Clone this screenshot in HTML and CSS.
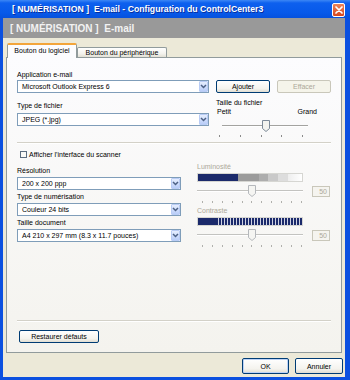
FILE: index.html
```html
<!DOCTYPE html>
<html lang="fr">
<head>
<meta charset="utf-8">
<title>E-mail - Configuration du ControlCenter3</title>
<link rel="stylesheet" href="styles.css">
</head>
<body>
<div class="window">
  <div class="titlebar">
    <span class="title">[ NUMÉRISATION ]&nbsp; E-mail - Configuration du ControlCenter3</span>
    <span class="close"><svg width="8" height="8" viewBox="0 0 8 8"><path d="M1 1L7 7M7 1L1 7" stroke="#fff" stroke-width="1.7" stroke-linecap="round"/></svg></span>
  </div>
  <div class="client">
    <div class="banner">[ NUMÉRISATION ]&nbsp; E-mail</div>
    <div class="tabs">
      <div class="tab active">Bouton du logiciel</div>
      <div class="tab">Bouton du périphérique</div>
    </div>
    <div class="panel">
      <div class="top">
        <div class="col-left">
          <div class="lbl">Application e-mail</div>
          <div class="select mt1"><span>Microsoft Outlook Express 6</span><span class="arrow"><svg width="7" height="5" viewBox="0 0 7 5"><path d="M1 1L3.5 3.5L6 1" fill="none" stroke="#4D6185" stroke-width="1.5"/></svg></span></div>
          <div class="lbl mt8">Type de fichier</div>
          <div class="select mt3"><span>JPEG (*.jpg)</span><span class="arrow"><svg width="7" height="5" viewBox="0 0 7 5"><path d="M1 1L3.5 3.5L6 1" fill="none" stroke="#4D6185" stroke-width="1.5"/></svg></span></div>
        </div>
        <div class="col-right">
          <div class="btnrow">
            <div class="btn small">Ajouter</div>
            <div class="btn small disabled">Effacer</div>
          </div>
          <div class="lbl mt5">Taille du fichier</div>
          <div class="range"><span>Petit</span><span>Grand</span></div>
          <div class="slider size">
            <div class="track"></div>
            <svg class="thumb" width="8" height="12" viewBox="0 0 8 12"><path d="M0.5 0.5H7.5V8.5L4 11.5L0.5 8.5Z" fill="#F3F3EF" stroke="#7D8A98"/></svg>
          </div>
          <div class="ticks size-ticks"><i></i><i></i><i></i><i></i><i></i></div>
        </div>
      </div>
      <div class="sep"></div>
      <div class="check"><span class="box"></span><span>Afficher l'interface du scanner</span></div>
      <div class="lower">
        <div class="low-left">
          <div class="lbl mt7">Résolution</div>
          <div class="select mt2"><span>200 x 200 ppp</span><span class="arrow"><svg width="7" height="5" viewBox="0 0 7 5"><path d="M1 1L3.5 3.5L6 1" fill="none" stroke="#4D6185" stroke-width="1.5"/></svg></span></div>
          <div class="lbl mt2">Type de numérisation</div>
          <div class="select mt2"><span>Couleur 24 bits</span><span class="arrow"><svg width="7" height="5" viewBox="0 0 7 5"><path d="M1 1L3.5 3.5L6 1" fill="none" stroke="#4D6185" stroke-width="1.5"/></svg></span></div>
          <div class="lbl mt2">Taille document</div>
          <div class="select mt2"><span>A4 210 x 297 mm (8.3 x 11.7 pouces)</span><span class="arrow"><svg width="7" height="5" viewBox="0 0 7 5"><path d="M1 1L3.5 3.5L6 1" fill="none" stroke="#4D6185" stroke-width="1.5"/></svg></span></div>
        </div>
        <div class="low-right">
          <div class="lbl dim mt3">Luminosité</div>
          <div class="bar lum mt2"><i class="s1"></i><i class="s2"></i><i class="s3"></i><i class="s4"></i><i class="s5"></i><i class="s6"></i></div>
          <div class="srow mt2">
            <div class="slider wide">
              <div class="track dis"></div>
              <svg class="thumb" width="8" height="12" viewBox="0 0 8 12"><path d="M0.5 0.5H7.5V8.5L4 11.5L0.5 8.5Z" fill="#F5F5F2" stroke="#B5B8BC"/></svg>
            </div>
            <div class="valbox">50</div>
          </div>
          <div class="ticks wide-ticks mt3"><i></i><i></i><i></i><i></i><i></i><i></i><i></i><i></i><i></i><i></i><i></i></div>
          <div class="lbl dim mt3">Contraste</div>
          <div class="bar con mt2"></div>
          <div class="srow mt2">
            <div class="slider wide">
              <div class="track dis"></div>
              <svg class="thumb" width="8" height="12" viewBox="0 0 8 12"><path d="M0.5 0.5H7.5V8.5L4 11.5L0.5 8.5Z" fill="#F5F5F2" stroke="#B5B8BC"/></svg>
            </div>
            <div class="valbox">50</div>
          </div>
          <div class="ticks wide-ticks mt3"><i></i><i></i><i></i><i></i><i></i><i></i><i></i><i></i><i></i><i></i><i></i></div>
        </div>
      </div>
      <div class="bottom">
        <div class="sep"></div>
        <div class="btn restore">Restaurer défauts</div>
      </div>
    </div>
    <div class="footer">
      <div class="btn big default">OK</div>
      <div class="btn big">Annuler</div>
    </div>
  </div>
</div>
</body>
</html>
```

FILE: styles.css
```css
* { box-sizing: border-box; }
body {
  margin: 0;
  font-family: "Liberation Sans", Arial, sans-serif;
  font-size: 7px;
  color: #000;
}
.window {
  width: 350px;
  height: 380px;
  background: #0B50E0;
  display: flex;
  flex-direction: column;
  overflow: hidden;
}
.titlebar {
  height: 18px;
  flex: none;
  display: flex;
  align-items: center;
  padding: 0 5px 0 12px;
  background: linear-gradient(#3C87F5 0, #0D60EE 3px, #0759E9 13px, #0651DD 18px);
}
.title {
  flex: 1;
  color: #fff;
  font-weight: bold;
  font-size: 8.7px;
  white-space: nowrap;
  text-shadow: 1px 1px 0 #0A2E9C;
}
.close {
  width: 13px;
  height: 14px;
  align-self: flex-start;
  margin-top: 3px;
  border: 1px solid #fff;
  border-radius: 2px;
  background: linear-gradient(#EC8559, #D6471E);
  display: flex;
  align-items: center;
  justify-content: center;
}
.client {
  flex: 1;
  margin: 0 5px 3px 3px;
  background: #ECE9D8;
  display: flex;
  flex-direction: column;
}
.banner {
  height: 20px;
  flex: none;
  background: #999999;
  color: #F2F2F2;
  font-weight: bold;
  font-size: 10px;
  display: flex;
  align-items: center;
  padding-left: 7px;
  white-space: nowrap;
}
.tabs {
  display: flex;
  align-items: flex-end;
  height: 14px;
  flex: none;
  margin: 5px 0 0 4px;
  position: relative;
  z-index: 1;
}
.tab {
  height: 10px;
  width: 90px;
  border: 1px solid #919B9C;
  border-bottom: none;
  border-radius: 2px 2px 0 0;
  background: linear-gradient(#FFFFFF, #F4F3EE 60%, #E2E0D5);
  display: flex;
  align-items: center;
  justify-content: center;
  white-space: nowrap;
}
.tab.active {
  width: 70px;
  height: 15px;
  margin-bottom: -1px;
  padding-bottom: 2px;
  border-top: 2px solid #F3A53A;
  background: #FCFCFE;
}
.panel {
  flex: 1;
  margin: 0 3px;
  border: 1px solid #919B9C;
  background: linear-gradient(#FCFCFE, #F4F3EE);
  display: flex;
  flex-direction: column;
  padding: 12px 10px 0 10px;
}
.top { display: flex; flex: none; }
.col-left { width: 192px; display: flex; flex-direction: column; }
.col-right { flex: 1; margin-left: 7px; display: flex; flex-direction: column; }
.lbl { height: 9px; line-height: 9px; white-space: nowrap; }
.lbl.dim { color: #ACA899; }
.mt1 { margin-top: 1px; }
.mt2 { margin-top: 2px; }
.mt3 { margin-top: 3px; }
.mt5 { margin-top: 5px; }
.mt7 { margin-top: 7px; }
.mt8 { margin-top: 8px; }
.select {
  height: 13px;
  border: 1px solid #7F9DB9;
  background: #fff;
  display: flex;
  align-items: center;
  padding-left: 4px;
  white-space: nowrap;
}
.arrow {
  margin-left: auto;
  width: 9px;
  height: 11px;
  border: 1px solid #B9CCF5;
  border-radius: 1px;
  background: linear-gradient(#E6EEFE, #B9CDF8);
  display: flex;
  align-items: center;
  justify-content: center;
}
.btnrow { display: flex; gap: 7px; margin-top: 10px; height: 13px; }
.btn {
  border: 1px solid #003C74;
  border-radius: 2px;
  background: linear-gradient(#FFFFFF, #F4F3EE 70%, #E0DDD2);
  display: flex;
  align-items: center;
  justify-content: center;
  white-space: nowrap;
}
.btn.small { width: 54px; height: 13px; }
.btn.disabled {
  border-color: #C9C7BA;
  color: #ACA899;
  background: #F5F4EA;
}
.range {
  height: 9px;
  line-height: 9px;
  display: flex;
  justify-content: space-between;
  padding: 0 14px 0 1px;
}
.slider { position: relative; }
.slider.size { width: 86px; height: 16px; margin: 2px 0 0 6px; }
.track {
  position: absolute;
  left: 0;
  right: 0;
  top: 7px;
  height: 2px;
  border-top: 1px solid #A3A3A0;
  border-bottom: 1px solid #FFFFFF;
  background: #DCDAD2;
}
.track.dis { top: 6px; border-top-color: #C3C3C0; }
.thumb { position: absolute; top: 2px; }
.slider.size .thumb { left: 40px; }
.ticks { display: flex; justify-content: space-between; height: 2px; }
.ticks i { width: 1px; height: 2px; background: #8A8A8A; }
.size-ticks { width: 84px; margin: 1px 0 0 3px; }
.sep {
  flex: none;
  border-top: 1px solid #D3D1C8;
  border-bottom: 1px solid #FFFFFF;
  margin-top: 5px;
}
.check {
  display: flex;
  align-items: center;
  height: 10px;
  margin-top: 5px;
  flex: none;
}
.check .box {
  width: 7px;
  height: 7px;
  margin: 0 2px 0 3px;
  border: 1px solid #5C6D80;
  background: #FAFAF7;
}
.lower { display: flex; flex: none; }
.low-left { width: 164px; display: flex; flex-direction: column; }
.low-right { flex: 1; margin-left: 16px; display: flex; flex-direction: column; }
.bar { width: 106px; height: 9px; border: 1px solid #D6D6D2; }
.bar.lum { display: flex; }
.bar.lum i { height: 100%; }
.lum .s1 { width: 40px; background: #1B2A6B; }
.lum .s2 { width: 21px; background: #9B9B9B; }
.lum .s3 { width: 9px; background: #ADADAD; }
.lum .s4 { width: 10px; background: #C9C9C9; }
.lum .s5 { width: 10px; background: #DDDDDD; }
.lum .s6 { flex: 1; background: linear-gradient(90deg, #EEEEEE, #FFFFFF); }
.bar.con {
  background:
    linear-gradient(90deg, #1B2A6B 0 19px, transparent 19px),
    repeating-linear-gradient(90deg, #1B2A6B 0 2px, #D0D3E2 2px 3px);
}
.srow { display: flex; align-items: center; height: 14px; }
.slider.wide { width: 106px; height: 14px; }
.slider.wide .thumb { left: 51px; top: 1px; }
.valbox {
  width: 18px;
  height: 11px;
  margin-left: 9px;
  border: 1px solid #C9C7BA;
  background: #F5F4EF;
  color: #ACA899;
  text-align: right;
  padding-right: 2px;
  line-height: 9px;
}
.wide-ticks { width: 100px; margin-left: 5px; }
.wide-ticks i { background: #B0B0AC; }
.bottom { margin-top: auto; display: flex; flex-direction: column; }
.btn.restore { width: 80px; height: 13px; margin: 8px 0 9px 2px; }
.footer {
  flex: none;
  display: flex;
  justify-content: flex-end;
  gap: 6px;
  height: 16px;
  margin: 5px 0 3px 0;
  padding-right: 2px;
}
.btn.big { width: 47px; height: 16px; }
.btn.big + .btn.big { width: 48px; }
.btn.default { box-shadow: inset 0 0 0 1px #BCD2F6; }
```
